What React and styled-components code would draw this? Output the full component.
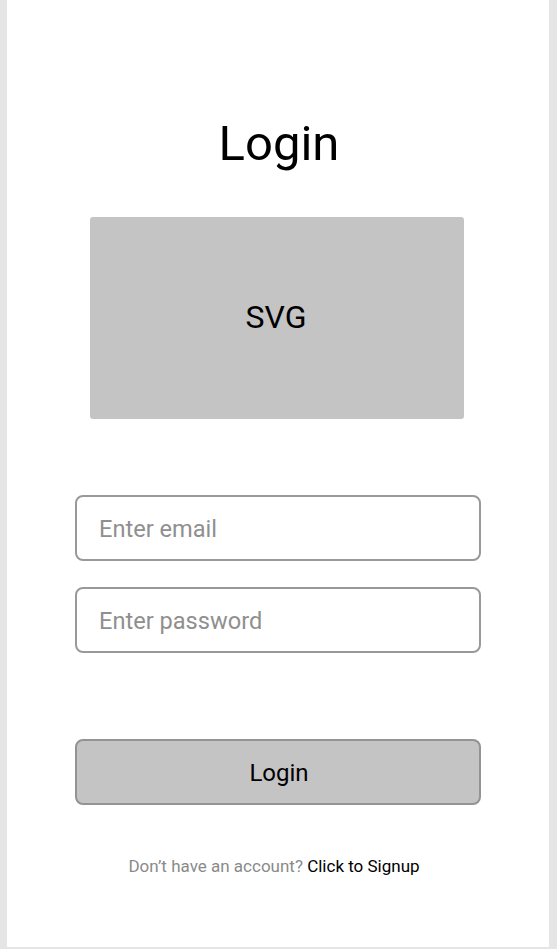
import React, { useState } from "react";
import styled, { createGlobalStyle } from "styled-components";

const GlobalStyle = createGlobalStyle`
  html, body {
    margin: 0;
    padding: 0;
    background: #e5e5e5;
  }
  body {
    font-family: Roboto, "Liberation Sans", sans-serif;
  }
  * {
    box-sizing: border-box;
  }
`;

function App() {
  const [email, setEmail] = useState("");
  const [password, setPassword] = useState("");

  return (
    <>
      <GlobalStyle />
      <Page>
        <Title>Login</Title>
        <Illustration>SVG</Illustration>
        <Form onSubmit={(e) => e.preventDefault()}>
          <Field
            type="email"
            placeholder="Enter email"
            value={email}
            onChange={(e) => setEmail(e.target.value)}
          />
          <Field
            type="password"
            placeholder="Enter password"
            value={password}
            onChange={(e) => setPassword(e.target.value)}
          />
          <SubmitButton type="submit">Login</SubmitButton>
        </Form>
        <Footer>
          Don’t have an account? <SignupLink href="#">Click to Signup</SignupLink>
        </Footer>
      </Page>
    </>
  );
}

const Page = styled.div`
  margin: 0 8px 0 7px;
  min-height: 947px;
  background: #ffffff;
  display: flex;
  flex-direction: column;
  align-items: center;
  padding-top: 116px;
`;

const Title = styled.h1`
  margin: 0 0 0 2px;
  font-size: 49px;
  line-height: 56px;
  font-weight: 400;
  color: #000;
`;

const Illustration = styled.div`
  margin-top: 45px;
  width: 374px;
  height: 202px;
  background: #c4c4c4;
  border-radius: 3px;
  display: flex;
  align-items: center;
  justify-content: center;
  font-size: 32px;
  color: #000;
  margin-left: -2px;
  padding: 0 2px 2px 0;
`;

const Form = styled.form`
  margin-top: 76px;
  width: 406px;
  display: flex;
  flex-direction: column;
`;

const Field = styled.input`
  height: 66px;
  width: 100%;
  border: 2px solid #999999;
  border-radius: 8px;
  padding: 2px 20px 0 22px;
  font-family: Roboto, "Liberation Sans", sans-serif;
  font-size: 23.6px;
  color: #000;
  outline: none;
  & + & {
    margin-top: 26px;
  }
  &::placeholder {
    color: #8f8f8f;
  }
`;

const SubmitButton = styled.button`
  margin-top: 86px;
  height: 66px;
  width: 100%;
  background: #c4c4c4;
  border: 2px solid #939393;
  border-radius: 8px;
  padding: 2px 0 0 2px;
  font-family: Roboto, "Liberation Sans", sans-serif;
  font-size: 24px;
  color: #000;
  cursor: pointer;
`;

const Footer = styled.p`
  margin: 51px 8px 0 0;
  font-size: 17px;
  line-height: 21px;
  color: #8a8a8a;
`;

const SignupLink = styled.a`
  color: #000;
  text-decoration: none;
`;

export default App;
